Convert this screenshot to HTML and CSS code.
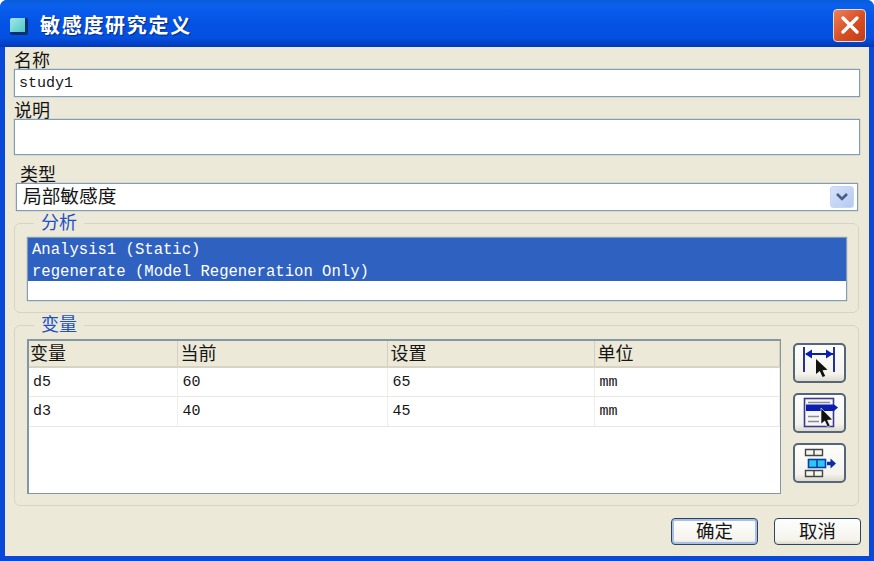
FILE: index.html
```html
<!DOCTYPE html>
<html lang="zh-CN">
<head>
    <meta charset="UTF-8">
    <meta name="viewport" content="width=device-width, initial-scale=1.0">
    <title>敏感度研究定义</title>
    <link rel="stylesheet" href="styles.css">
</head>
<body>
    <div class="window">
        <div class="titlebar">
            <span class="title-icon"></span>
            <span class="title-text">敏感度研究定义</span>
            <button class="close-btn" type="button">
                <svg width="22" height="22" viewBox="0 0 22 22"><path d="M4 4 L18 18 M18 4 L4 18" stroke="#fff" stroke-width="3.4" stroke-linecap="round"/></svg>
            </button>
        </div>

        <div class="content">
            <label class="field-label">名称</label>
            <div class="text-input">study1</div>

            <label class="field-label desc-label">说明</label>
            <div class="text-input desc-input"></div>

            <label class="field-label type-label">类型</label>
            <div class="select-box">
                <span class="select-text">局部敏感度</span>
                <span class="select-arrow">
                    <svg width="14" height="10" viewBox="0 0 14 10"><path d="M2 2 L7 7 L12 2" fill="none" stroke="#4a5c80" stroke-width="2.6"/></svg>
                </span>
            </div>

            <fieldset class="group list-group">
                <legend>分析</legend>
                <div class="list-box">
                    <div class="list-item">Analysis1 (Static)</div>
                    <div class="list-item">regenerate (Model Regeneration Only)</div>
                </div>
            </fieldset>

            <fieldset class="group">
                <legend>变量</legend>
                <div class="vars-row">
                    <div class="table-box">
                        <table class="vars-table">
                            <thead>
                                <tr><th class="col-a">变量</th><th class="col-b">当前</th><th class="col-c">设置</th><th>单位</th></tr>
                            </thead>
                            <tbody>
                                <tr><td>d5</td><td>60</td><td>65</td><td>mm</td></tr>
                                <tr><td>d3</td><td>40</td><td>45</td><td>mm</td></tr>
                            </tbody>
                        </table>
                    </div>
                    <div class="tool-col">
                        <button class="tool-btn" type="button">
                            <svg width="49" height="36" viewBox="0 0 49 36">
                                <path d="M9 2 V27 M39 2 V27" stroke="#2a2f96" stroke-width="2"/>
                                <path d="M11 9 H38" stroke="#0a1fb0" stroke-width="2"/>
                                <path d="M10 9 L17 4.5 V13.5 Z M38 9 L31 4.5 V13.5 Z" fill="#0a1fb0"/>
                                <path d="M21 14 V29 L24.8 26 L27.5 32 L30.2 31 L27.5 25.3 L32.5 24.8 Z" fill="#111"/>
                            </svg>
                        </button>
                        <button class="tool-btn" type="button">
                            <svg width="49" height="36" viewBox="0 0 49 36">
                                <rect x="9.5" y="3.5" width="29" height="28" fill="#f6f6f8" stroke="#3a3a90" stroke-width="1.6"/>
                                <path d="M13 7.5 H35 M13 21.5 H24 M13 26.5 H24" stroke="#8a8a90" stroke-width="1.4"/>
                                <path d="M11 9.5 H39 L43 12.5 L39 16 H11 Z" fill="#0a1fb0"/>
                                <path d="M26 13 V29 L29.8 26 L32.5 32 L35.2 31 L32.5 25.3 L37.5 24.8 Z" fill="#111" stroke="#fff" stroke-width=".6"/>
                            </svg>
                        </button>
                        <button class="tool-btn" type="button">
                            <svg width="49" height="36" viewBox="0 0 49 36">
                                <path d="M10.5 4.5 H27.5 V10.5 H10.5 Z M19 4.5 V10.5 M10.5 25.5 H27.5 V31.5 H10.5 Z M19 25.5 V31.5" fill="#f4f4f0" stroke="#444" stroke-width="1.4"/>
                                <rect x="13.5" y="14.5" width="17" height="8" fill="#2cc8f0" stroke="#0a3fb0" stroke-width="1.6"/>
                                <path d="M22 14.5 V22.5" stroke="#0a3fb0" stroke-width="1.6"/>
                                <path d="M32 16.8 H35.5 V13.5 L41 18.5 L35.5 23.5 V20.2 H32 Z" fill="#0a2fa0"/>
                            </svg>
                        </button>
                    </div>
                </div>
            </fieldset>

            <div class="footer">
                <button class="push-btn default-btn" type="button">确定</button>
                <button class="push-btn" type="button">取消</button>
            </div>
        </div>
    </div>
</body>
</html>
```

FILE: styles.css
```css
* {
    box-sizing: border-box;
}
body {
    margin: 0;
    font-family: "Noto Sans CJK SC", "Liberation Sans", sans-serif;
    color: #151515;
}
.window {
    width: 874px;
    height: 561px;
    display: flex;
    flex-direction: column;
    background: #0a48d8;
    border-radius: 7px 7px 0 0;
    overflow: hidden;
}

/* title bar */
.titlebar {
    height: 47px;
    flex: none;
    display: flex;
    align-items: center;
    padding: 3px 8px 0 10px;
    background: linear-gradient(#0a5cd8 0, #0a60ec 12%, #0452e6 50%, #0450e0 80%, #0238b8 100%);
}
.title-icon {
    width: 18px;
    height: 17px;
    margin-top: 2px;
    background: linear-gradient(135deg, #a4e8e4, #4cc8c8);
    border-right: 3px solid #0c2f70;
    border-bottom: 3px solid #0c2f70;
    border-radius: 2px;
}
.title-text {
    margin-left: 12px;
    flex: 1;
    color: #fff;
    font-size: 20px;
    font-weight: 700;
    letter-spacing: 1.7px;
    line-height: 24px;
    text-shadow: 1px 1px 1px #0a2a80;
}
.close-btn {
    width: 33px;
    height: 33px;
    padding: 0;
    display: flex;
    align-items: center;
    justify-content: center;
    border: 1px solid #e8dcd8;
    border-radius: 4px;
    background: linear-gradient(135deg, #ec8058, #d84e24 55%, #c03c18);
}

/* dialog body */
.content {
    flex: 1;
    margin: 0 5px 5px 5px;
    padding: 3px 9px 0 9px;
    background: #ece9d8;
}
.field-label {
    display: block;
    height: 19px;
    font-size: 18px;
    line-height: 19px;
}
.desc-label {
    margin-top: 3px;
}
.type-label {
    margin: 8px 0 0 6px;
    height: 20px;
    line-height: 20px;
}
.text-input {
    height: 28px;
    padding-left: 4px;
    background: #fff;
    border: 1px solid #7f9db9;
    box-shadow: 0 0 1px #7a929c;
    font-family: "Liberation Mono", monospace;
    font-size: 15px;
    line-height: 27px;
}
.desc-input {
    height: 36px;
}
.select-box {
    height: 28px;
    margin: 0 2px;
    padding: 0 3px 0 6px;
    display: flex;
    align-items: center;
    justify-content: space-between;
    background: #fff;
    border: 1px solid #7f9db9;
    box-shadow: 0 0 1px #7a929c;
    font-size: 18.7px;
}
.select-text {
    margin-bottom: 4px;
    line-height: 20px;
}
.select-arrow {
    width: 24px;
    height: 22px;
    display: flex;
    align-items: center;
    justify-content: center;
    background: linear-gradient(135deg, #d6e2fb, #b4c9f4);
    border: 1px solid #c8d6f4;
    border-radius: 3px;
}

/* group boxes */
.group {
    min-width: 0;
    margin: 2px 1px 0 0;
    padding: 4px 12px 11px 12px;
    border: 1px solid #d8d4c2;
    border-radius: 6px;
}
.list-group {
    padding-right: 11px;
}
.group legend {
    margin-left: 7px;
    padding: 0 7px 4px;
    color: #1c4fc8;
    font-size: 18px;
    line-height: 16px;
}
.list-box {
    height: 64px;
    background: #fff;
    border: 1px solid #7f9db9;
    box-shadow: 0 0 1px #7a929c;
    font-family: "Liberation Mono", monospace;
    font-size: 15.6px;
    color: #fff;
}
.list-item {
    height: 21.5px;
    padding-left: 4px;
    background: #2f62c0;
    line-height: 24px;
    white-space: pre;
}
.vars-row {
    display: flex;
    gap: 12px;
}
.table-box {
    width: 754px;
    height: 155px;
    background: #fff;
    border: 2px solid #82979f;
    border-right-width: 1px;
    border-bottom-width: 1px;
}
.vars-table {
    width: 100%;
    border-collapse: collapse;
    table-layout: fixed;
}
.vars-table th {
    height: 26px;
    padding: 0 0 3px 3px;
    text-align: left;
    font-size: 18px;
    font-weight: 400;
    line-height: 20px;
    background: #ece9d8;
    border-right: 1px solid #d4d0c0;
    border-bottom: 2px solid #d8d4c4;
}
.vars-table th.col-a {
    padding-left: 1px;
}
.vars-table td {
    height: 29.5px;
    padding: 1px 0 0 5px;
    font-family: "Liberation Mono", monospace;
    font-size: 15px;
    border-right: 1px solid #eeeeea;
    border-bottom: 1px solid #e8e8e4;
}
.vars-table td:first-child {
    padding-left: 4px;
}
.col-a {
    width: 148px;
}
.col-b {
    width: 210px;
}
.col-c {
    width: 207px;
}
.tool-col {
    display: flex;
    flex-direction: column;
    gap: 10px;
    padding-top: 4px;
}
.tool-btn {
    width: 53px;
    height: 40px;
    padding: 0;
    display: block;
    background: linear-gradient(#fdfdfb, #f4f3ee 80%, #dedbcc);
    border: 2px solid #56667a;
    border-radius: 5px;
}

/* ok / cancel */
.footer {
    display: flex;
    justify-content: flex-end;
    gap: 16px;
    margin: 12px -1px 0 0;
}
.push-btn {
    width: 87px;
    height: 27px;
    padding: 0 0 2px;
    font-family: inherit;
    font-size: 18.5px;
    line-height: 23px;
    color: #151515;
    background: linear-gradient(#fefefe, #f4f3ec 85%, #dcd8c8);
    border: 1.5px solid #2c4460;
    border-radius: 4px;
}
.default-btn {
    box-shadow: inset 0 0 0 2px #a6c0ea;
}
```
